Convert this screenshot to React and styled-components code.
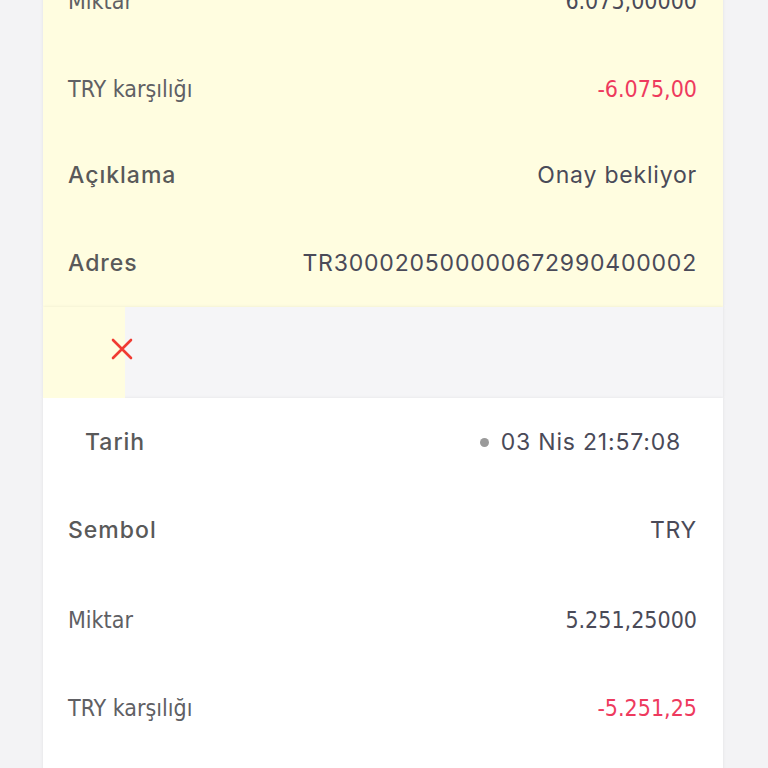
import styled, { createGlobalStyle } from "styled-components";

const GlobalStyle = createGlobalStyle`
  html, body {
    margin: 0;
    padding: 0;
    background: #f3f3f5;
  }
  body {
    font-family: "Inter", "Noto Sans", sans-serif;
  }
`;

const Page = styled.div`
  height: 768px;
  overflow: hidden;
  padding: 0 45px 0 43px;
`;

const List = styled.div`
  margin-top: -45px;
  display: flex;
  flex-direction: column;
`;

const Card = styled.div`
  background: ${(p) => (p.$pending ? "#fffde0" : "#ffffff")};
  box-shadow: 0 0 3px rgba(0, 0, 0, 0.08);
  display: flex;
  flex-direction: column;
`;

const Row = styled.div`
  height: 88px;
  display: flex;
  align-items: center;
  justify-content: space-between;
  padding: 0 ${(p) => (p.$inset ? "42px" : "26px")} 0
    ${(p) => (p.$inset ? "42px" : "25px")};
`;

const condensedFont = `"DejaVu Sans Condensed", "DejaVu Sans", sans-serif`;
const roundFont = `"Inter", "Noto Sans", sans-serif`;

const Label = styled.span`
  font-family: ${(p) => (p.$condensed ? condensedFont : roundFont)};
  font-stretch: ${(p) => (p.$condensed ? "condensed" : "normal")};
  font-size: 23px;
  letter-spacing: ${(p) => (p.$condensed ? "0" : "1px")};
  font-weight: ${(p) => (p.$condensed ? 400 : 500)};
  color: ${(p) => (p.$condensed ? "#606064" : "#595959")};
  padding-top: ${(p) => (p.$condensed ? "3px" : "0")};
`;

const Value = styled.span`
  display: flex;
  align-items: center;
  gap: 12px;
  font-family: ${(p) => (p.$condensed ? condensedFont : roundFont)};
  font-stretch: ${(p) => (p.$condensed ? "condensed" : "normal")};
  font-size: 23px;
  letter-spacing: ${(p) => (p.$condensed ? "0" : "0.8px")};
  font-weight: 400;
  color: ${(p) => (p.$negative ? "#ee3a5e" : "#4a4a58")};
  padding-top: ${(p) => (p.$condensed ? "3px" : "0")};
`;

const Dot = styled.span`
  width: 9px;
  height: 9px;
  border-radius: 50%;
  background: #9a9a9a;
`;

const ActionRow = styled.div`
  height: 91px;
  display: flex;
  background: #fffde0;
  box-shadow: 0 0 3px rgba(0, 0, 0, 0.08);
`;

const DeleteCell = styled.button`
  position: relative;
  z-index: 1;
  width: 82px;
  border: 0;
  padding: 0 0 8px;
  background: #fffde0;
  display: flex;
  align-items: center;
  justify-content: flex-end;
  overflow: visible;
  cursor: pointer;
  svg {
    margin-right: -8px;
    flex-shrink: 0;
  }
`;

const SlidPanel = styled.div`
  flex: 1;
  background: #f5f5f7;
`;

const CloseIcon = () => (
  <svg width="22" height="22" viewBox="0 0 22 22">
    <path
      d="M2 2 L20 20 M20 2 L2 20"
      stroke="#f03b32"
      strokeWidth="2.6"
      strokeLinecap="round"
      fill="none"
    />
  </svg>
);

function DetailRow({ label, value, labelCondensed, valueCondensed, negative, inset, dot }) {
  return (
    <Row $inset={inset}>
      <Label $condensed={labelCondensed}>{label}</Label>
      <Value $condensed={valueCondensed} $negative={negative}>
        {dot && <Dot />}
        {value}
      </Value>
    </Row>
  );
}

export default function App() {
  return (
    <>
      <GlobalStyle />
      <Page>
        <List>
          <Card $pending>
            <DetailRow label="Miktar" value="6.075,00000" labelCondensed valueCondensed />
            <DetailRow label="TRY karşılığı" value="-6.075,00" labelCondensed valueCondensed negative />
            <DetailRow label="Açıklama" value="Onay bekliyor" />
            <DetailRow label="Adres" value="TR300020500000672990400002" />
          </Card>
          <ActionRow>
            <DeleteCell type="button" aria-label="Sil">
              <CloseIcon />
            </DeleteCell>
            <SlidPanel />
          </ActionRow>
          <Card>
            <DetailRow label="Tarih" value="03 Nis 21:57:08" inset dot />
            <DetailRow label="Sembol" value="TRY" />
            <DetailRow label="Miktar" value="5.251,25000" labelCondensed valueCondensed />
            <DetailRow label="TRY karşılığı" value="-5.251,25" labelCondensed valueCondensed negative />
            <Row />
          </Card>
        </List>
      </Page>
    </>
  );
}
